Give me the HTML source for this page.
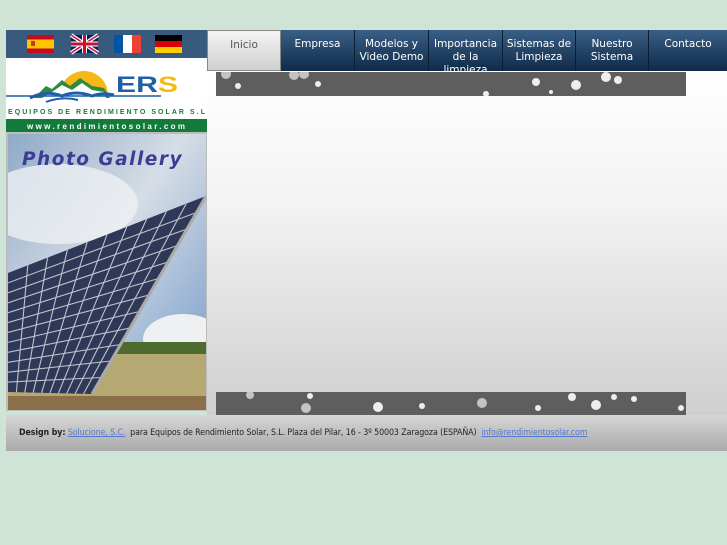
<!DOCTYPE html>
<html><head><meta charset="utf-8"><style>
body{margin:0;width:727px;height:545px;background:#cfe4d7;font-family:"DejaVu Sans","Liberation Sans",sans-serif;position:relative;overflow:hidden}
.abs{position:absolute}
#left{left:6px;top:30px;width:201px;height:381px;background:#bdbdbd}
#flags{left:6px;top:30px;width:201px;height:28px;background:#385a7c}
#nav{left:207px;top:30px;width:520px;height:41px;background:linear-gradient(#3a5f86,#0f2a48)}
.nv{position:absolute;top:0;height:41px;color:#fff;font-size:10.5px;text-align:center;line-height:13px;padding-top:8px;box-sizing:border-box;border-right:1px solid #0a1e36;overflow:hidden}
#content{left:207px;top:71px;width:520px;height:344px;background:linear-gradient(#fff 0%,#f3f2f2 40%,#cfcfcf 100%)}
.strip{background:#5e5e5e}
#footer{left:6px;top:415px;width:721px;height:36px;background:linear-gradient(#d6d6d6,#aaa)}
#footer span{position:absolute;left:13px;top:13px;font-size:8.8px;color:#222;font-family:"DejaVu Sans Condensed","DejaVu Sans",sans-serif;white-space:nowrap;letter-spacing:-0.1px}
#footer a{color:#5577cc;text-decoration:underline}
</style></head><body>
<div class="abs" id="left"></div>
<div class="abs" id="flags">
<svg width="201" height="28">
<g transform="translate(21,5)"><rect width="27" height="18" fill="#c60b1e"/><rect y="4.5" width="27" height="9" fill="#ffc400"/><rect x="4" y="6" width="4" height="5" fill="#c33"/></g>
<g transform="translate(65,5)"><rect width="27" height="18" fill="#012169"/><path d="M0 0L27 18M27 0L0 18" stroke="#fff" stroke-width="4"/><path d="M0 0L27 18M27 0L0 18" stroke="#c8102e" stroke-width="1.5"/><path d="M13.5 0V18M0 9H27" stroke="#fff" stroke-width="5"/><path d="M13.5 0V18M0 9H27" stroke="#c8102e" stroke-width="3"/></g>
<g transform="translate(108,5)"><rect width="9" height="18" fill="#0055a4"/><rect x="9" width="9" height="18" fill="#fff"/><rect x="18" width="9" height="18" fill="#ef4135"/></g>
<g transform="translate(149,5)"><rect width="27" height="6" fill="#000"/><rect y="6" width="27" height="6" fill="#dd0000"/><rect y="12" width="27" height="6" fill="#ffce00"/></g>
</svg></div>
<div class="abs" style="left:6px;top:58px;width:201px;height:74px;background:#fff">
<svg width="201" height="74">
<path d="M54 37 A24 24 0 0 1 102 37Z" fill="#f5b814"/>
<path d="M28 40 L40 28 L46 31 L56 22 L64 28 L74 20 L86 28 L98 30 L104 40Z" fill="#2e8a3c"/>
<path d="M36 40 L46 34 L56 27 L66 32 L76 25 L86 32 L98 34 L100 40Z" fill="#fff"/>
<path d="M0 38 L155 38" stroke="#1f5fa8" stroke-width="1.5"/>
<path d="M24 40 Q40 32 56 38 Q70 32 86 38 Q96 34 108 37" stroke="#1f5fa8" stroke-width="3" fill="none"/>
<path d="M40 44 Q56 38 72 42" stroke="#1f5fa8" stroke-width="2" fill="none"/>
<text x="110" y="34" font-family="Liberation Sans" font-weight="bold" font-size="22" fill="#1f5fa8" textLength="62" lengthAdjust="spacingAndGlyphs">ER<tspan fill="#f5b814">S</tspan></text>
<text x="2" y="56" font-family="Liberation Sans" font-weight="bold" font-size="7" fill="#1a7a3c" textLength="197" lengthAdjust="spacing">EQUIPOS DE RENDIMIENTO SOLAR S.L</text>
<rect y="61" width="201" height="13" fill="#127a3a"/>
<text x="100" y="71" text-anchor="middle" font-family="Liberation Sans" font-weight="bold" font-size="8" fill="#fff" textLength="158" lengthAdjust="spacing">www.rendimientosolar.com</text>
</svg></div>
<div class="abs" style="left:8px;top:134px;width:198px;height:276px;overflow:hidden">
<svg width="198" height="276">
<defs><linearGradient id="sky" x1="0" y1="0" x2="1" y2="1"><stop offset="0" stop-color="#8fa9c7"/><stop offset="0.45" stop-color="#d6dde6"/><stop offset="1" stop-color="#6f97c8"/></linearGradient></defs>
<rect width="198" height="276" fill="url(#sky)"/>
<ellipse cx="50" cy="70" rx="80" ry="40" fill="#eef0f2" opacity=".8"/>
<ellipse cx="175" cy="205" rx="40" ry="25" fill="#eef0f2"/>
<rect y="215" width="198" height="61" fill="#b5a872"/>
<rect x="100" y="208" width="98" height="12" fill="#4d6b2e"/>
<rect y="262" width="198" height="14" fill="#8a6f4a"/>
<path d="M0 139 L198 62 L84 260 L0 258Z" fill="#2f3856"/>
<g stroke="#c0c4cc" stroke-width="1.1">
<path d="M0 148.9L188.5 78.5M0 158.8L179 95M0 168.8L169.5 111.5M0 178.7L160 128M0 188.6L150.5 144.5M0 198.5L141 161M0 208.4L131.5 177.5M0 218.3L122 194M0 228.3L112.5 210.5M0 238.2L103 227M0 248.1L93.5 243.5"/>
<path d="M19.8 131.3L8.4 258.2M39.6 123.6L16.8 258.4M59.4 115.9L25.2 258.6M79.2 108.2L33.6 258.8M99 100.5L42 259M118.8 92.8L50.4 259.2M138.6 85.1L58.8 259.4M158.4 77.4L67.2 259.6M178.2 69.7L75.6 259.8"/>
</g>
<path d="M198 62 L84 260" stroke="#aaa" stroke-width="3"/>
<text x="14" y="31" font-family="DejaVu Sans" font-style="italic" font-weight="bold" font-size="18.5" fill="#3b3d94" letter-spacing="1.5">Photo Gallery</text>
</svg></div>
<div class="abs" id="nav">
<div class="nv" style="left:0;width:74px;background:linear-gradient(#f4f4f4,#cfcfcf);color:#555;border:1px solid #888">Inicio</div>
<div class="nv" style="left:74px;width:74px">Empresa</div>
<div class="nv" style="left:148px;width:74px">Modelos y<br>Video Demo</div>
<div class="nv" style="left:222px;width:74px">Importancia<br>de la<br>limpieza</div>
<div class="nv" style="left:296px;width:73px">Sistemas de<br>Limpieza</div>
<div class="nv" style="left:369px;width:73px">Nuestro<br>Sistema</div>
<div class="nv" style="left:442px;width:78px;border:none">Contacto</div>
</div>
<div class="abs" id="content"></div>
<div class="abs strip" style="left:216px;top:72px;width:470px;height:24px">
<svg width="470" height="24" fill="#eee"><circle cx="10" cy="2" r="5" opacity=".7"/><circle cx="22" cy="14" r="3"/><circle cx="78" cy="3" r="5" opacity=".7"/><circle cx="88" cy="2" r="5" opacity=".7"/><circle cx="102" cy="12" r="3"/><circle cx="270" cy="22" r="3"/><circle cx="320" cy="10" r="4"/><circle cx="360" cy="13" r="5"/><circle cx="390" cy="5" r="5"/><circle cx="402" cy="8" r="4"/><circle cx="335" cy="20" r="2"/></svg></div>
<div class="abs strip" style="left:216px;top:392px;width:470px;height:23px">
<svg width="470" height="23" fill="#eee"><circle cx="34" cy="3" r="4" opacity=".7"/><circle cx="94" cy="4" r="3"/><circle cx="90" cy="16" r="5" opacity=".7"/><circle cx="162" cy="15" r="5"/><circle cx="206" cy="14" r="3"/><circle cx="266" cy="11" r="5" opacity=".7"/><circle cx="322" cy="16" r="3"/><circle cx="356" cy="5" r="4"/><circle cx="380" cy="13" r="5"/><circle cx="398" cy="5" r="3"/><circle cx="418" cy="7" r="3"/><circle cx="465" cy="16" r="3"/></svg></div>
<div class="abs" id="footer"><span><b>Design by:</b> <a>Solucione, S.C.</a>&nbsp; para Equipos de Rendimiento Solar, S.L. Plaza del Pilar, 16 - 3º 50003 Zaragoza (ESPAÑA) &nbsp;<a>info@rendimientosolar.com</a></span></div>
</body></html>
